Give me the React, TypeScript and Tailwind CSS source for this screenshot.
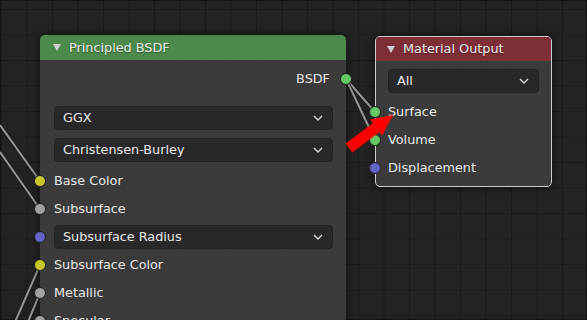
const font = { fontFamily: '"DejaVu Sans", "Liberation Sans", sans-serif' };

type SocketColor = "yellow" | "grey" | "blue" | "green";

const socketBg: Record<SocketColor, string> = {
  yellow: "bg-[#c7c729]",
  grey: "bg-[#a1a1a1]",
  blue: "bg-[#6363c7]",
  green: "bg-[#63c763]",
};

// sockets sit on the node edge, over the border
function Socket({ color, pos }: { color: SocketColor; pos: string }) {
  return (
    <span
      className={`absolute ${pos} top-1/2 -translate-y-1/2 w-[12px] h-[12px] rounded-full border border-[#202020] ${socketBg[color]}`}
    />
  );
}

function Chevron() {
  return (
    <svg width="10" height="6" viewBox="0 0 10 6" className="shrink-0">
      <path d="M1 1 L5 5 L9 1" stroke="#d8d8d8" strokeWidth="1.4" fill="none" />
    </svg>
  );
}

function Dropdown({ label }: { label: string }) {
  return (
    <div className="h-[24px] flex items-center justify-between rounded-[4px] bg-[#282828] border border-[#232323] pl-[8px] pr-[9px] text-[12.8px] text-[#e8e8e8]">
      <span>{label}</span>
      <Chevron />
    </div>
  );
}

function Triangle() {
  return (
    <svg width="8" height="7" viewBox="0 0 8 7" className="shrink-0">
      <polygon points="0,0 8,0 4,7" fill="#cfcfcf" />
    </svg>
  );
}

function InputRow({ label, color, pos }: { label: string; color: SocketColor; pos: string }) {
  return (
    <div className="relative h-[28px] flex items-center">
      <Socket color={color} pos={pos} />
      <span className="text-[12.8px] text-[#e8e8e8]">{label}</span>
    </div>
  );
}

function PrincipledNode() {
  const pos = "-left-[20px]";
  return (
    <div className="absolute left-[40px] top-[35px] w-[306px] h-[300px] rounded-[5px] bg-[rgba(61,61,61,0.94)] shadow-[0_0_10px_rgba(0,0,0,0.55)]">
      <div className="h-[25px] flex items-center gap-[8px] pl-[13px] rounded-t-[5px] bg-[#4b8a4a] text-[12.8px] text-[#ececec]">
        <Triangle />
        <span className="[text-shadow:0_1px_1px_rgba(0,0,0,0.35)]">Principled BSDF</span>
      </div>
      <div className="pt-[5px]">
        <div className="relative h-[28px] flex items-center justify-end pr-[16px]">
          <span className="text-[12.8px] text-[#e8e8e8]">BSDF</span>
          <Socket color="green" pos="-right-[6px]" />
        </div>
        <div className="pl-[14px] pr-[13px] mt-[13px] flex flex-col gap-[8px]">
          <Dropdown label="GGX" />
          <Dropdown label="Christensen-Burley" />
        </div>
        <div className="mt-[5px] pl-[14px] pr-[13px]">
          <InputRow label="Base Color" color="yellow" pos={pos} />
          <InputRow label="Subsurface" color="grey" pos={pos} />
          <div className="relative h-[28px] flex flex-col justify-center">
            <Socket color="blue" pos={pos} />
            <Dropdown label="Subsurface Radius" />
          </div>
          <InputRow label="Subsurface Color" color="yellow" pos={pos} />
          <InputRow label="Metallic" color="grey" pos={pos} />
          <InputRow label="Specular" color="grey" pos={pos} />
        </div>
      </div>
    </div>
  );
}

function MaterialOutputNode() {
  const pos = "-left-[19px]";
  return (
    <div className="absolute left-[375px] top-[36px] w-[177px] h-[151px] rounded-[5px] border border-[#cdcdcd] bg-[rgba(61,61,61,0.94)] shadow-[0_0_10px_rgba(0,0,0,0.55)]">
      <div className="h-[24px] flex items-center gap-[8px] pl-[11px] rounded-t-[4px] bg-[#7e2e36] text-[12.8px] text-[#ececec]">
        <Triangle />
        <span className="[text-shadow:0_1px_1px_rgba(0,0,0,0.35)]">Material Output</span>
      </div>
      <div className="px-[12px] mt-[8px]">
        <Dropdown label="All" />
      </div>
      <div className="mt-[5px] pl-[12px]">
        <InputRow label="Surface" color="green" pos={pos} />
        <InputRow label="Volume" color="green" pos={pos} />
        <InputRow label="Displacement" color="blue" pos={pos} />
      </div>
    </div>
  );
}

const links: [number, number, number, number][] = [
  [0, 125, 40, 181],
  [0, 152, 40, 209],
  [15, 322, 40, 265],
  [28, 322, 40, 293],
  [346, 79, 375, 112],
  [346, 79, 375, 140],
];

function Links() {
  return (
    <svg className="absolute inset-0" width="587" height="320">
      {links.map(([x1, y1, x2, y2], i) => (
        <g key={i}>
          <line x1={x1} y1={y1} x2={x2} y2={y2} stroke="#1c1c1c" strokeWidth="4" />
          <line x1={x1} y1={y1} x2={x2} y2={y2} stroke="#979797" strokeWidth="2" />
        </g>
      ))}
    </svg>
  );
}

function RedArrow() {
  return (
    <svg className="absolute inset-0 pointer-events-none" width="587" height="320">
      <polygon
        points="393,115 382.2,135.6 379.5,132 352.3,152.4 345.7,143.6 372.9,123.2 370.2,119.6"
        fill="#ff0000"
      />
    </svg>
  );
}

export default function App() {
  return (
    <div
      style={font}
      className="relative w-[587px] h-[320px] overflow-hidden bg-[#232323] bg-[linear-gradient(to_right,#1b1b1b_1px,transparent_1px),linear-gradient(to_bottom,#1b1b1b_1px,transparent_1px)] bg-size-[25.5px_25.5px] bg-position-[1px_9px] shadow-[inset_0_0_0_1px_#141414]"
    >
      <Links />
      <PrincipledNode />
      <MaterialOutputNode />
      <RedArrow />
    </div>
  );
}
